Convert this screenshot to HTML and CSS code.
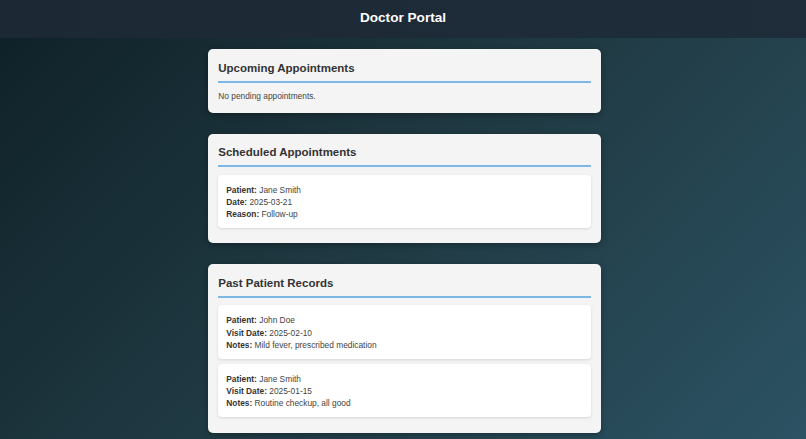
FILE: index.html
```html
<!DOCTYPE html>
<html lang="en">
<head>
<meta charset="utf-8">
<title>Doctor Portal</title>
<link rel="stylesheet" href="styles.css">
</head>
<body>
<header class="topbar">
  <h1 class="topbar-title">Doctor Portal</h1>
</header>
<main class="content">
  <section class="card">
    <h2 class="card-title">Upcoming Appointments</h2>
    <p class="line">No pending appointments.</p>
  </section>
  <section class="card">
    <h2 class="card-title">Scheduled Appointments</h2>
    <div class="entry">
      <p class="line"><strong>Patient:</strong> Jane Smith</p>
      <p class="line"><strong>Date:</strong> 2025-03-21</p>
      <p class="line"><strong>Reason:</strong> Follow-up</p>
    </div>
  </section>
  <section class="card">
    <h2 class="card-title">Past Patient Records</h2>
    <div class="entry">
      <p class="line"><strong>Patient:</strong> John Doe</p>
      <p class="line"><strong>Visit Date:</strong> 2025-02-10</p>
      <p class="line"><strong>Notes:</strong> Mild fever, prescribed medication</p>
    </div>
    <div class="entry">
      <p class="line"><strong>Patient:</strong> Jane Smith</p>
      <p class="line"><strong>Visit Date:</strong> 2025-01-15</p>
      <p class="line"><strong>Notes:</strong> Routine checkup, all good</p>
    </div>
  </section>
</main>
</body>
</html>
```

FILE: styles.css
```css
html, body {
  margin: 0;
  padding: 0;
}

body {
  min-height: 100vh;
  font-family: "Liberation Sans", Arial, sans-serif;
  background: linear-gradient(135deg, #0f2027 0%, #203a43 50%, #2c5364 100%);
  color: #444;
}

.topbar {
  background: linear-gradient(90deg, #1c2833, #1f2d3b);
  padding: 10.2px 0 12.5px;
  text-align: center;
}

.topbar-title {
  margin: 0;
  font-size: 13.6px;
  line-height: 15.6px;
  font-weight: bold;
  color: #ffffff;
}

.content {
  width: 393.4px;
  margin: 10.9px auto 0;
  position: relative;
  left: 1.6px;
}

.card {
  background: #f4f4f4;
  border-radius: 5px;
  padding: 12.4px 10px 10px 10.4px;
  margin-bottom: 20.8px;
  box-shadow: 0 2px 6px rgba(0, 0, 0, 0.3);
}

.card-title {
  margin: 0 0 7.8px;
  padding-bottom: 6px;
  border-bottom: 2px solid #7cb8e2;
  font-size: 11.5px;
  line-height: 13.1px;
  font-weight: bold;
  color: #333;
}

.line {
  margin: 0;
  font-size: 8.35px;
  line-height: 12.3px;
  color: #444;
}

.line strong {
  color: #333;
}

.entry {
  background: #ffffff;
  border-radius: 4px;
  padding: 8.8px 8px 7.4px;
  margin-bottom: 5.5px;
  box-shadow: 0 1px 3px rgba(0, 0, 0, 0.12);
}
```
